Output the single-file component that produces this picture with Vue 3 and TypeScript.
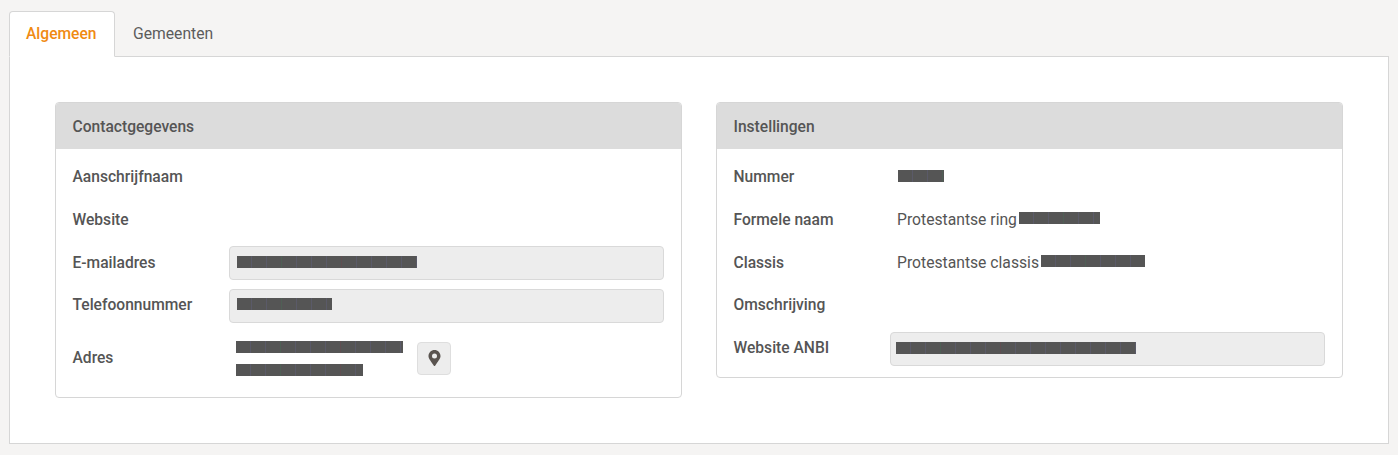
<script setup lang="ts">
interface Row {
  label: string;
  text?: string;
  bar?: number;
  kind?: "input" | "plain";
}
const contact: Row[] = [
  { label: "Aanschrijfnaam" },
  { label: "Website" },
  { label: "E-mailadres", bar: 180, kind: "input" },
  { label: "Telefoonnummer", bar: 95, kind: "input" },
];
const settings: Row[] = [
  { label: "Nummer", bar: 46, kind: "plain" },
  { label: "Formele naam", text: "Protestantse ring", bar: 81, kind: "plain" },
  { label: "Classis", text: "Protestantse classis", bar: 104, kind: "plain" },
  { label: "Omschrijving" },
  { label: "Website ANBI", bar: 240, kind: "input" },
];
</script>

<template>
  <div class="page">
    <nav class="tabs">
      <a class="tab active">Algemeen</a>
      <a class="tab">Gemeenten</a>
    </nav>
    <main class="content">
      <section class="card">
        <header class="card-head">Contactgegevens</header>
        <div class="card-body">
          <div v-for="r in contact" :key="r.label" class="row">
            <span class="label">{{ r.label }}</span>
            <div v-if="r.kind === 'input'" class="field">
              <span class="bar" :style="{ width: r.bar + 'px' }"></span>
            </div>
          </div>
          <div class="row address">
            <span class="label">Adres</span>
            <div class="addr-wrap">
              <div class="addr-lines">
                <span class="bar" style="width: 167px"></span>
                <span class="bar" style="width: 127px"></span>
              </div>
              <button class="map-btn" type="button" aria-label="Kaart">
                <svg width="13" height="16" viewBox="0 0 384 512" aria-hidden="true">
                  <path fill="#5a5450" d="M172.3 501.7C27 291 0 261.600 0 192 0 86 86 0 192 0s192 86 192 192c0 69.600-27 99-172.300 309.700-9.500 13.800-29.900 13.800-39.400 0zM192 272a80 80 0 1 0 0-160 80 80 0 0 0 0 160z" />
                </svg>
              </button>
            </div>
          </div>
        </div>
      </section>
      <section class="card">
        <header class="card-head">Instellingen</header>
        <div class="card-body">
          <div v-for="r in settings" :key="r.label" class="row">
            <span class="label">{{ r.label }}</span>
            <div v-if="r.kind === 'input'" class="field">
              <span class="bar shift" :style="{ width: r.bar + 'px' }"></span>
            </div>
            <div v-else-if="r.kind === 'plain'" class="plain">
              <span v-if="r.text" class="val">{{ r.text }}</span>
              <span class="bar" :style="{ width: r.bar + 'px' }"></span>
            </div>
          </div>
        </div>
      </section>
    </main>
  </div>
</template>

<style>
html,
body {
  margin: 0;
  background: #f5f4f3;
}
</style>

<style scoped>
.page {
  box-sizing: border-box;
  height: 455px;
  padding: 11px 9px;
  background: #f5f4f3;
  font-family: Roboto, "Liberation Sans", sans-serif;
  font-size: 15.7px;
  color: #555;
  display: flex;
  flex-direction: column;
}
.tabs {
  display: flex;
  position: relative;
  z-index: 1;
  margin-bottom: -1px;
}
.tab {
  box-sizing: border-box;
  height: 46px;
  padding: 0 17px 2px;
  display: flex;
  align-items: center;
  border: 1px solid transparent;
  border-radius: 4px 4px 0 0;
  color: #5c5c5c;
}
.tab.active {
  width: 106px;
  background: #fff;
  border-color: #d6d6d6;
  border-bottom-color: #fff;
  color: #f08a12;
  font-size: 15.6px;
  font-weight: 500;
  padding: 1px 17px 1px 16px;
}
.content {
  box-sizing: border-box;
  width: 1380px;
  height: 388px;
  background: #fff;
  border: 1px solid #d6d6d6;
  padding: 45px;
  display: flex;
  align-items: flex-start;
  gap: 34px;
}
.card {
  flex: 1 1 0;
  min-width: 0;
  border: 1px solid #d6d6d6;
  border-radius: 4px;
  overflow: hidden;
}
.card-head {
  height: 45px;
  margin: -1px -1px 0;
  padding: 2px 18px 0 17.500px;
  box-sizing: content-box;
  background: #dcdcdc;
  display: flex;
  align-items: center;
  font-size: 15.6px;
  font-weight: 500;
  color: #555;
}
.card-body {
  padding: 11px 17px 11px;
  display: flex;
  flex-direction: column;
  gap: 9px;
}
.row {
  display: grid;
  grid-template-columns: 156px 1fr;
  align-items: center;
  min-height: 34px;
}
.row.address {
  min-height: 54px;
}
.label {
  font-size: 15.6px;
  font-weight: 500;
  color: #555;
  margin-left: -0.5px;
  margin-top: -1px;
}
.row:nth-child(n + 4) .label {
  margin-top: -3px;
}
.field {
  box-sizing: border-box;
  height: 34px;
  background: #ededed;
  border: 1px solid #d9d9d9;
  border-radius: 4px;
  padding: 0 7px 2px;
  display: flex;
  align-items: center;
}
.row:nth-child(4) .field {
  padding-bottom: 4px;
}
.bar {
  display: inline-block;
  height: 12px;
  background:
    linear-gradient(90deg, transparent 0 44px, #4f5f55 44px 45px, transparent 45px 104px, #5f4f52 104px 105px, transparent 105px),
    repeating-linear-gradient(90deg, #555 0 14px, #5a5a68 14px 15px);
}
.bar.shift {
  margin-left: -2px;
}
.plain {
  padding: 0 0 3px 7px;
  display: flex;
  align-items: center;
  gap: 2px;
}
.plain .bar:first-child {
  margin-left: 1px;
}
.val {
  margin-top: 1px;
}
.val + .bar {
  margin-top: -1px;
}
.addr-wrap {
  display: flex;
  align-items: center;
  padding-left: 7px;
}
.addr-lines {
  width: 181px;
  display: flex;
  flex-direction: column;
  gap: 11px;
  margin-top: -2px;
}
.map-btn {
  box-sizing: border-box;
  width: 34px;
  height: 33px;
  padding: 0;
  margin-top: -2px;
  background: #ededed;
  border: 1px solid #dedede;
  border-radius: 4px;
  display: flex;
  align-items: center;
  justify-content: center;
}
</style>
